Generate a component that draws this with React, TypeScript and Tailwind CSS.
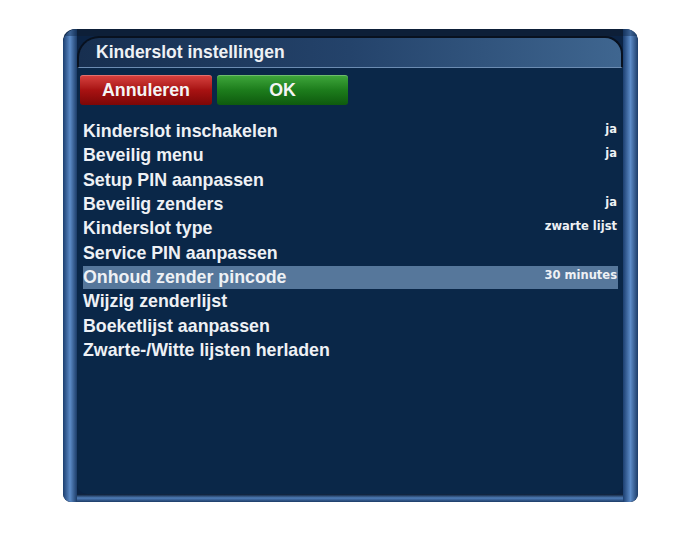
const ITEMS: { label: string; value?: string }[] = [
  { label: "Kinderslot inschakelen", value: "ja" },
  { label: "Beveilig menu", value: "ja" },
  { label: "Setup PIN aanpassen" },
  { label: "Beveilig zenders", value: "ja" },
  { label: "Kinderslot type", value: "zwarte lijst" },
  { label: "Service PIN aanpassen" },
  { label: "Onhoud zender pincode", value: "30 minutes" },
  { label: "Wijzig zenderlijst" },
  { label: "Boeketlijst aanpassen" },
  { label: "Zwarte-/Witte lijsten herladen" },
];

const SELECTED = 6;

function Pillar({ side }: { side: "left" | "right" }) {
  return (
    <div
      className={`flex flex-col bg-gradient-to-r from-[#1c3f70] via-[#5d8cc8] to-[#1d3d69] ${
        side === "left" ? "w-[14px] rounded-tl-[14px] rounded-bl-[8px]" : "w-[15px] rounded-tr-[10px] rounded-br-[8px]"
      }`}
    >
      <div className="h-[7px] bg-[#0b2344]/40" />
      <div className="flex-1" />
    </div>
  );
}

export default function App() {
  return (
    <div
      className="w-[700px] h-[560px] bg-white pt-[29px] pl-[63px]"
      style={{ fontFamily: '"Liberation Sans", Arial, sans-serif' }}
    >
      <div className="w-[575px] h-[473px] flex bg-[#0b2344] rounded-t-[12px] rounded-b-[8px] overflow-hidden">
        <Pillar side="left" />
        <div className="flex-1 flex flex-col">
          <div className="h-[7px] bg-[#0d1f38]" />
          <div className="h-[32px] flex items-center pl-[17px] rounded-tl-[22px] rounded-tr-[18px] border-t-2 border-l-2 border-r-2 border-[#08111f] border-b border-b-[#6c8cb2] bg-gradient-to-r from-[#172f50] via-[#24436b] to-[#3f6690]">
            <span className="text-[17.5px] font-bold text-[#eef1f5] leading-none">Kinderslot instellingen</span>
          </div>
          <div className="flex-1 flex flex-col bg-[#0a2748] rounded-b-[10px]">
            <div className="flex gap-[5px] pl-[3px] pt-[7px]">
              <div className="w-[132px] h-[30px] rounded-[3px] flex items-center justify-center bg-gradient-to-b from-[#d8413f] via-[#a81212] to-[#7d0707] shadow-[inset_0_1px_0_rgba(255,255,255,0.25)]">
                <span className="text-[17.8px] font-bold text-[#f4f4f4]">Annuleren</span>
              </div>
              <div className="w-[131px] h-[30px] rounded-[3px] flex items-center justify-center bg-gradient-to-b from-[#3fa83c] via-[#1d7d1c] to-[#0e5a0e] shadow-[inset_0_1px_0_rgba(255,255,255,0.25)]">
                <span className="text-[17.8px] font-bold text-[#f4f4f4]">OK</span>
              </div>
            </div>
            <div className="flex flex-col gap-[1.33px] pl-[6px] pr-[5px] pt-[15px]">
              {ITEMS.map((it, i) => (
                <div
                  key={it.label}
                  className={`h-[23px] flex justify-between ${i === SELECTED ? "bg-[#56779b]" : ""}`}
                >
                  <span className="text-[17.8px] font-bold leading-[23px] text-[#eef1f5]">{it.label}</span>
                  {it.value && (
                    <span
                      className="text-[11.5px] font-bold leading-[14px] pt-[2px] pr-[1px] text-[#eef1f5]"
                      style={{ fontFamily: '"DejaVu Sans", sans-serif' }}
                    >
                      {it.value}
                    </span>
                  )}
                </div>
              ))}
            </div>
            <div className="flex-1" />
          </div>
          <div className="h-[8px] bg-gradient-to-b from-[#0a1a30] via-[#4f7db8] to-[#1c3b66]" />
        </div>
        <Pillar side="right" />
      </div>
    </div>
  );
}
